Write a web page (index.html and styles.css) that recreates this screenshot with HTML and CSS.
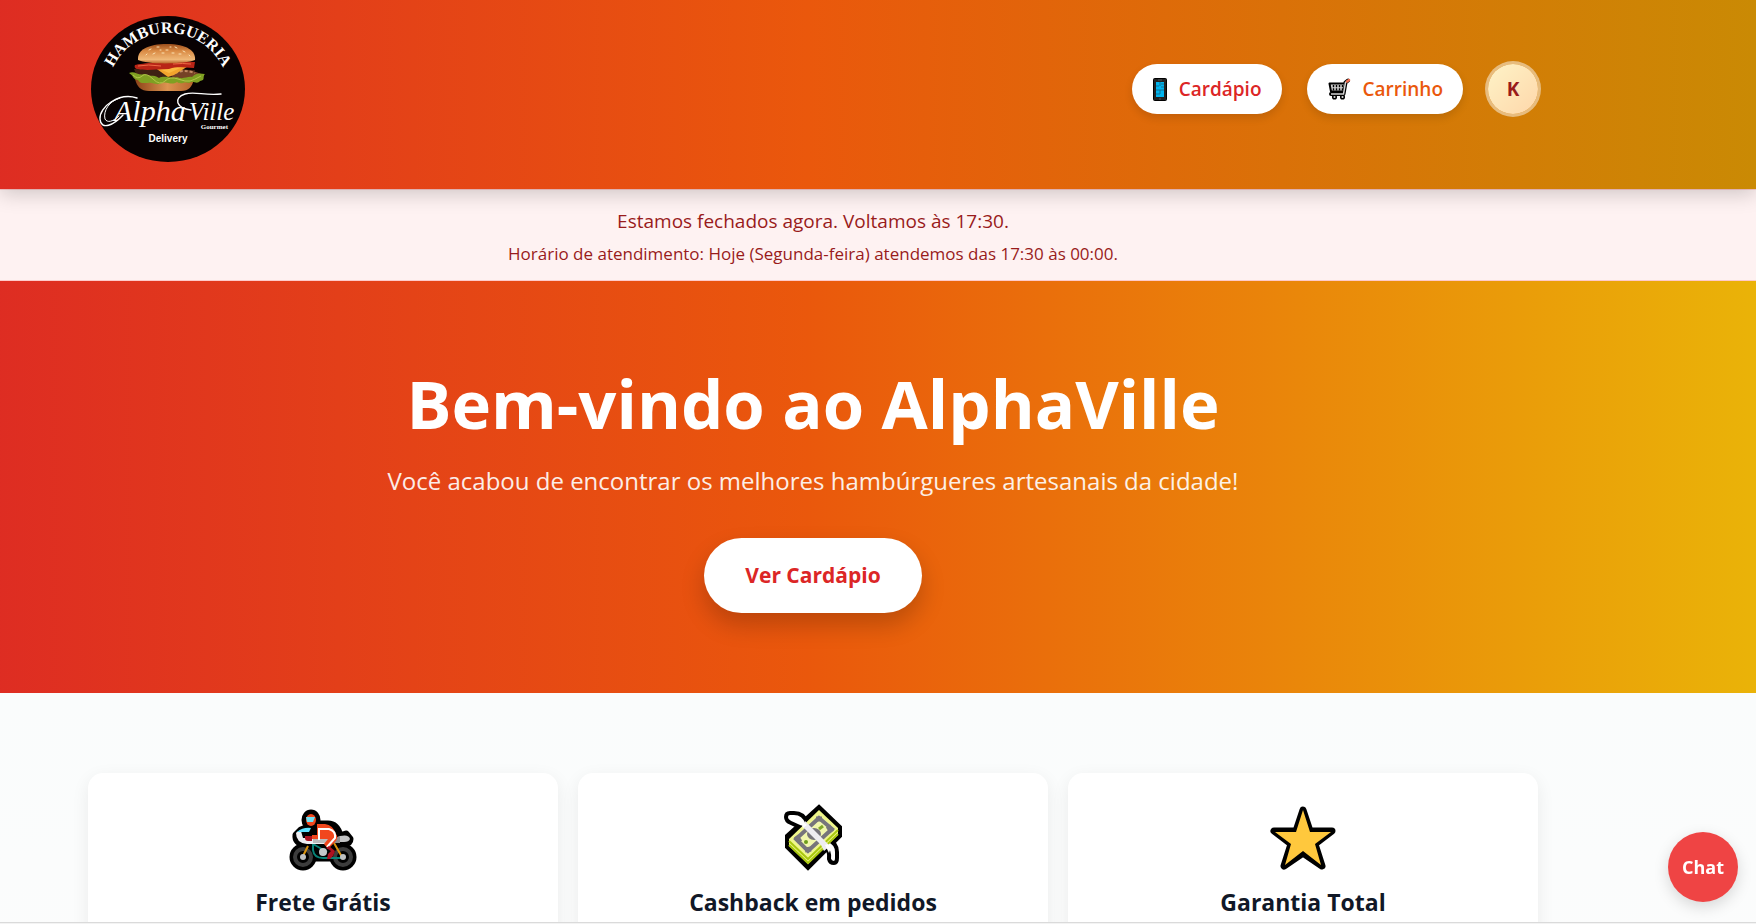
FILE: index.html
```html
<!DOCTYPE html>
<html lang="pt-BR">
<head>
    <meta charset="UTF-8">
    <meta name="viewport" content="width=device-width, initial-scale=1.0">
    <title>AlphaVille Hamburgueria</title>
    <link rel="stylesheet" href="styles.css">
</head>
<body>
    <header class="header">
        <div class="container header-content">
            <a href="#" class="logo" aria-label="Hamburgueria Alpha Ville">
                <svg class="logo-img" viewBox="0 0 154 146">
                    <defs>
                        <path id="logoArc" d="M16 78 A61 61 0 1 1 138 78"/>
                        <linearGradient id="bun" x1="0" y1="0" x2="0" y2="1">
                            <stop offset="0" stop-color="#9a4d1c"/>
                            <stop offset=".35" stop-color="#d98a44"/>
                            <stop offset=".8" stop-color="#efb878"/>
                            <stop offset="1" stop-color="#b9652a"/>
                        </linearGradient>
                        <linearGradient id="bunBase" x1="0" y1="0" x2="1" y2="0">
                            <stop offset="0" stop-color="#8c4218"/>
                            <stop offset=".55" stop-color="#dc9450"/>
                            <stop offset="1" stop-color="#b5622a"/>
                        </linearGradient>
                    </defs>
                    <ellipse cx="77" cy="73" rx="77" ry="73" fill="#080102"/>
                    <text class="logo-arc"><textPath href="#logoArc" startOffset="50%" text-anchor="middle">HAMBURGUERIA</textPath></text>
                    <!-- hambúrguer -->
                    <path d="M44 63 C62 66 88 67 103 63 C101 71 98 75 90 75 H58 C50 75 46 71 44 63Z" fill="url(#bunBase)"/>
                    <path d="M43 53 L104 54 L101 63 L47 63Z" fill="#3f2113"/>
                    <path d="M80 56 Q92 50 110 58 L103 64 H82Z" fill="#754126"/>
                    <path d="M84 57 Q93 53 104 57" stroke="#c28a64" stroke-width="2" fill="none" stroke-dasharray="3 2"/>
                    <path d="M38 57 C43 54 48 60 53 58 C58 61 62 58 68 62 C74 59 80 63 86 61 C92 64 96 60 101 61 C106 56 110 58 114 58 C111 61 115 64 109 65 C106 69 102 64 98 67 C93 65 90 69 86 66 C80 70 76 65 71 67 C65 70 62 66 57 67 C52 67 49 68 47 64 C42 64 43 60 38 57Z" fill="#7fa022"/>
                    <path d="M42 59 Q47 64 51 60 T62 63 T74 65 T87 63 T99 65 T110 60" stroke="#b3c64a" stroke-width="1" fill="none"/>
                    <path d="M63 51 L99 49 L83 59 L77 61Z" fill="#f3a42c"/>
                    <path d="M66 52 L94 50 L78 57Z" fill="#fcb840"/>
                    <path d="M44 49 C52 46 96 45 104 46 L103 52 C92 52 88 50 78 53 C68 53 55 55 47 53 C44 53 43 51 44 49Z" fill="#b82416"/>
                    <path d="M47 50 Q57 48 70 50 M82 48 Q92 47 100 48" stroke="#ef6a45" stroke-width="1" fill="none"/>
                    <path d="M47 44 C46 34 57 28 76 28 C96 28 105 35 104 44 C95 48 57 49 47 44Z" fill="url(#bun)"/>
                    <path d="M58 34l2-1M66 31l2 0M75 34l2 0M84 31l2 1M92 35l2 1M62 38l2-1M71 37l2 0M81 37l2 0M55 39l1-1M98 39l1 1M88 38l2 0M69 34l1 0M79 31l1 0" stroke="#fbe2b3" stroke-width="1" stroke-linecap="round"/>
                    <!-- floreios do letreiro -->
                    <g stroke="#fff" fill="none" stroke-linecap="round">
                        <path d="M46 82 C28 76 8 91 9 103 C10 115 23 109 32 99" stroke-width="1.400"/>
                        <path d="M29 82 C18 85 12 95 14 103 C16 107 22 106 28 100" stroke-width="1"/>
                        <path d="M100 94 C85 92 82 82 94 78 C104 75 114 80 130 78" stroke-width="1.400"/>
                    </g>
                    <text class="logo-script" x="23" y="105">Alpha</text>
                    <text class="logo-script logo-script-small" x="98" y="104">Ville</text>
                    <text class="logo-gourmet" x="137" y="113" text-anchor="end">Gourmet</text>
                    <text class="logo-delivery" x="77" y="126" text-anchor="middle">Delivery</text>
                </svg>
            </a>
            <nav class="nav">
                <a href="#cardapio" class="nav-btn nav-btn-menu">
                    <svg class="nav-icon nav-icon-phone" viewBox="0 0 14 23">
                        <rect x=".5" y=".5" width="13" height="22" rx="1" fill="#222" stroke="#000"/>
                        <rect x="3" y="4" width="8" height="15" fill="#00b5ef"/>
                        <path d="M3 8H6M3 12H11M7 4V8M7 12V16M3 16H7M8 6H11M8 9H11" stroke="#137194" stroke-width="1"/>
                        <path d="M5 2H9M6 21H8" stroke="#555" stroke-width="1"/>
                    </svg>
                    Cardápio
                </a>
                <a href="#carrinho" class="nav-btn nav-btn-cart">
                    <svg class="nav-icon nav-icon-cart" viewBox="0 0 23 22">
                        <path d="M3 16H15.500L17.500 4.500L20 2.500" stroke="#000" stroke-width="4" fill="none" stroke-linecap="round" stroke-linejoin="round"/>
                        <path d="M1.500 5.500H17L15.500 13.500H3Z" fill="#d4d4d4" stroke="#000" stroke-width="2" stroke-linejoin="round"/>
                        <circle cx="6.500" cy="19" r="1.800" fill="#ddd" stroke="#000" stroke-width="1.500"/>
                        <circle cx="14.500" cy="19" r="1.800" fill="#ddd" stroke="#000" stroke-width="1.500"/>
                        <path d="M5.500 7V12.500M8.500 7V12.500M11.500 7V12.500M14.500 7V12.500" stroke="#000" stroke-width="1.500" stroke-dasharray="2.200 1"/>
                        <path d="M3 16H15.500L17.500 4.500L19 3" stroke="#d4d4d4" stroke-width="1.500" fill="none"/>
                        <path d="M19 3.500L21 2" stroke="#f26b4e" stroke-width="2.500" stroke-linecap="round"/>
                    </svg>
                    Carrinho
                </a>
                <button type="button" class="avatar">K</button>
            </nav>
        </div>
    </header>

    <div class="status-banner">
        <p class="status-title">Estamos fechados agora. Voltamos às 17:30.</p>
        <p class="status-hours">Horário de atendimento: Hoje (Segunda-feira) atendemos das 17:30 às 00:00.</p>
    </div>

    <main>
        <section class="hero">
            <h1>Bem-vindo ao AlphaVille</h1>
            <p class="hero-text">Você acabou de encontrar os melhores hambúrgueres artesanais da cidade!</p>
            <a href="#cardapio" class="hero-btn">Ver Cardápio</a>
        </section>

        <section class="features">
            <div class="container features-grid">
                <article class="card">
                    <svg class="card-icon" viewBox="0 -2 70 70">
                        <g fill="#000" stroke="#000" stroke-width="7" stroke-linejoin="round">
                            <circle cx="15" cy="52" r="10"/>
                            <circle cx="55" cy="52" r="10"/>
                            <ellipse cx="23" cy="15" rx="6" ry="7"/>
                            <path d="M13 25 Q18 22 24 23 L29 19 H40 Q49 19 52 31 L58 29 L62 34 Q62 38 56 39 L47 43 L52 53 H27 L19 41 Q7 38 8 30Z"/>
                        </g>
                        <circle cx="15" cy="52" r="8" fill="none" stroke="#3c3c3c" stroke-width="4"/>
                        <circle cx="55" cy="52" r="8" fill="none" stroke="#3c3c3c" stroke-width="4"/>
                        <path d="M20 41L15 51M46 38L54 52" stroke="#d9920b" stroke-width="2"/>
                        <path d="M25 39L39 47M25 39V45Q26 53 35 53H54" fill="none" stroke="#078276" stroke-width="2"/>
                        <circle cx="35" cy="47" r="4" fill="#c4c8ca"/>
                        <path d="M8 28 Q9 26 13 26 L15 33 H28 L42 34 V39 H19 Q8 38 8 28Z" fill="#eeeef1"/>
                        <path d="M25 33H44V38H25Z" fill="#bbb"/>
                        <path d="M44 35L52 31Q61 29 62 34Q61 37 56 37H44Z" fill="#c2c3c5"/>
                        <path d="M44 34L52 31V38H44Z" fill="#8d8d8d"/>
                        <path d="M9 27Q15 22 23 23L21 27Z" fill="#5de1ff"/>
                        <path d="M29 19H37Q45 20 48 29Q51 32 47 37L40 44L36 39L40 34H24V30H29Z" fill="#f1471d"/>
                        <path d="M17 31H24V36H20Q17 36 17 33Z" fill="#ac1120"/>
                        <path d="M31 35V24H41Q48 26 47 33L39 42" fill="none" stroke="#fff" stroke-width="2"/>
                        <path d="M41 41L47 46L45 51L42 54H39L40 49L43 46L38 43Z" fill="#ac1120"/>
                        <ellipse cx="23" cy="15" rx="5" ry="6" fill="#f1471d"/>
                        <path d="M18 12H27L25 17H19Z" fill="#70e2f5"/>
                        <circle cx="15" cy="52" r="3" fill="#bec1c2"/>
                        <circle cx="55" cy="52" r="3" fill="#bec1c2"/>
                    </svg>
                    <h3>Frete Grátis</h3>
                </article>
                <article class="card">
                    <svg class="card-icon" viewBox="0 0 70 70">
                        <path d="M41 4L62 24V33L30 65L9 44V33Z" fill="#000" stroke="#000" stroke-width="4"/>
                        <path d="M29 20Q26 10 16 10H12Q8 10 8 14Q8 18 13 20L24 25Z" fill="#fff" stroke="#000" stroke-width="4" stroke-linejoin="round"/>
                        <path d="M47 44Q52 48 51 56Q52 60 56 60Q59 60 59 55V49Q59 40 50 37Z" fill="#fff" stroke="#000" stroke-width="4" stroke-linejoin="round"/>
                        <path d="M41 7L60 25V32L30 61L11 43V36Z" fill="#eff68b"/>
                        <path d="M11 38L30 56L60 27M11 42L30 60L60 31" fill="none" stroke="#aac80f" stroke-width="2"/>
                        <path d="M41 12L57 26L30 51L15 36Z" fill="#f7fbb9"/>
                        <path d="M41 15L54 26L30 48L18 36Z" fill="#f1f7ac" stroke="#77757b" stroke-width="4"/>
                        <path d="M38 16L44 16M50 23L54 29M18 33L22 39M27 47L33 46" stroke="#77757b" stroke-width="5"/>
                        <ellipse cx="36" cy="31" rx="7" ry="6" fill="#77757b"/>
                        <circle cx="28" cy="39" r="2" fill="#6d9d1b"/>
                        <path d="M41 26L45 23" stroke="#80a827" stroke-width="3"/>
                        <path d="M27 18L52 43L46 48L43 42L24 23Z" fill="#eeedf1"/>
                        <path d="M23 18Q26 19 29 22L25 25ZM47 42Q51 40 53 44L51 50Z" fill="#fff"/>
                    </svg>
                    <h3>Cashback em pedidos</h3>
                </article>
                <article class="card">
                    <svg class="card-icon" viewBox="0 1 70 70">
                        <path d="M35 8L42 29H64L47 42L54 64L35 51L16 64L23 42L6 29H28Z" fill="#000" stroke="#000" stroke-width="7" stroke-linejoin="round"/>
                        <path d="M35 8L42 30H63L47 42L53 63L35 49L17 63L23 42L7 30H28Z" fill="#ffc83d"/>
                    </svg>
                    <h3>Garantia Total</h3>
                </article>
            </div>
        </section>
    </main>

    <button type="button" class="chat-btn">Chat</button>
    <div class="bottom-bar"></div>
</body>
</html>
```
FILE: styles.css
```css
* {
    box-sizing: border-box;
    margin: 0;
    padding: 0;
}
body {
    --page-right: 130px;
    height: 100vh;
    overflow: hidden;
    font-family: 'Segoe UI', 'Open Sans', 'Noto Sans', sans-serif;
    background: #fafcfc;
    color: #111827;
}
a {
    text-decoration: none;
}
button {
    border: none;
    font-family: inherit;
    cursor: pointer;
}
.container {
    margin: 0 88px;
}
.header {
    position: relative;
    z-index: 10;
    padding: 16px var(--page-right) 27px 0;
    background: linear-gradient(to right, #dc2626 -130px, #ea580c 46%, #ca8a04);
    box-shadow: 0 4px 20px rgba(0, 0, 0, 0.2);
}
.header-content {
    display: flex;
    align-items: center;
    justify-content: space-between;
}
.logo {
    margin-left: 3px;
}
.logo-img {
    display: block;
    width: 154px;
    height: 146px;
}
.logo-arc {
    font: bold 16px 'Liberation Serif', serif;
    fill: #fff;
}
.logo-script {
    font: italic 30px 'Liberation Serif', serif;
    fill: #fff;
}
.logo-script-small {
    font-size: 25px;
}
.logo-gourmet {
    font: bold 7px 'Liberation Serif', serif;
    fill: #fff;
}
.logo-delivery {
    font: bold 10px 'Liberation Sans', sans-serif;
    fill: #fff;
}
.nav {
    display: flex;
    align-items: center;
    gap: 25px;
}
.nav-btn {
    display: flex;
    align-items: center;
    gap: 12px;
    height: 50px;
    padding: 0 20px 0 21px;
    border-radius: 25px;
    background: #fff;
    font-size: 19px;
    font-weight: 600;
    box-shadow: 0 4px 8px rgba(0, 0, 0, 0.12);
}
.nav-btn-menu {
    color: #dc2626;
}
.nav-btn-cart {
    color: #ea580c;
}
.nav-icon-phone {
    width: 14px;
    height: 23px;
}
.nav-icon-cart {
    width: 23px;
    height: 22px;
}
.avatar {
    width: 50px;
    height: 50px;
    border-radius: 50%;
    background: linear-gradient(135deg, #fef3c7, #fed7aa);
    color: #991b1b;
    font-size: 19px;
    font-weight: 700;
    box-shadow: 0 0 0 3px rgba(240, 215, 180, 0.7);
}
.status-banner {
    padding: 15px var(--page-right) 9px 0;
    border-top: 1px solid #fecaca;
    border-bottom: 1px solid #fecaca;
    background: #fef2f2;
    color: #991b1b;
    text-align: center;
}
.status-title {
    font-size: 19px;
    line-height: 32px;
}
.status-hours {
    font-size: 17px;
    line-height: 34px;
}
.hero {
    padding: 80px var(--page-right) 80px 0;
    background: linear-gradient(to right, #dc2626 -130px, #ea580c 46%, #eab308);
    color: #fff;
    text-align: center;
}
.hero h1 {
    margin-bottom: 18px;
    font-size: 67px;
    font-weight: 700;
    line-height: 84px;
}
.hero-text {
    margin-bottom: 40px;
    font-size: 24px;
    line-height: 35px;
    opacity: 0.9;
}
.hero-btn {
    display: inline-block;
    padding: 0 41px;
    border-radius: 38px;
    background: #fff;
    color: #dc2626;
    font-size: 21px;
    font-weight: 700;
    line-height: 75px;
    vertical-align: top;
    box-shadow: 0 12px 25px rgba(0, 0, 0, 0.2);
}
.features {
    padding: 80px var(--page-right) 80px 0;
    background: linear-gradient(#fafcfc, #fcfcfc);
}
.features-grid {
    display: grid;
    grid-template-columns: repeat(3, 1fr);
    gap: 20px;
}
.card {
    padding: 30px 30px 40px;
    border-radius: 15px;
    background: #fff;
    text-align: center;
    box-shadow: 0 5px 18px rgba(0, 0, 0, 0.07);
}
.card-icon {
    display: block;
    width: 70px;
    height: 70px;
    margin: 0 auto 12px;
}
.card h3 {
    font-size: 23px;
    line-height: 34px;
    font-weight: 700;
}
.chat-btn {
    position: fixed;
    right: 18px;
    bottom: 22px;
    z-index: 20;
    width: 70px;
    height: 70px;
    border-radius: 50%;
    background: #ef4444;
    color: #fff;
    font-size: 18px;
    font-weight: 700;
    box-shadow: 0 5px 15px rgba(0, 0, 0, 0.15);
}
.bottom-bar {
    position: fixed;
    left: 0;
    right: 0;
    bottom: 0;
    z-index: 15;
    height: 2px;
    border-top: 1px solid #dadada;
    background: #f3f3f3;
}
```
